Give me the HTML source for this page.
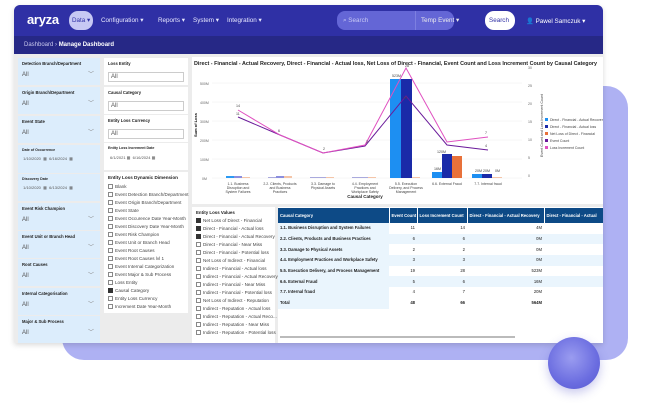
<!DOCTYPE html>
<html><head><meta charset="utf-8"><style>
*{box-sizing:border-box;margin:0;padding:0}
body{width:658px;height:403px;background:#fff;font-family:"Liberation Sans",sans-serif;position:relative;overflow:hidden}
.abs{position:absolute}
.back{left:62px;top:86px;width:566px;height:274px;background:#aeb1f3;border-radius:22px}
.sphere{left:548px;top:337px;width:52px;height:52px;border-radius:50%;background:radial-gradient(circle at 45% 40%,#9a9cf0,#6b6de0 60%,#5558cf);box-shadow:0 4px 10px rgba(80,80,200,.3)}
.panel{left:14px;top:5px;width:589px;height:338px;background:#ececec;border-radius:6px 6px 2px 2px;overflow:hidden;box-shadow:0 2px 6px rgba(0,0,0,.15)}
.nav{left:0;top:0;width:589px;height:31px;background:#2f30a5;color:#e8e8ff;font-size:6.3px}
.crumb{left:0;top:31px;width:589px;height:18px;background:#262886;color:#c9c9ee;font-size:6px;padding:6px 10px}
.f{position:absolute;background:#dcedfc;font-size:4.2px;font-weight:bold;color:#222;padding:3px 4px}
.f .v{font-weight:normal;font-size:6px;color:#555;margin-top:6px}
.f .c{position:absolute;right:6px;bottom:7px;font-size:6px;color:#888;font-weight:normal}
.w{position:absolute;background:#fff;font-size:4.2px;font-weight:bold;color:#222;padding:3px 4px}
.w .v{font-weight:normal;font-size:6px;color:#555;margin-top:6px;border:1px solid #ccc;padding:1px 2px}
.cb{font-size:4.6px;font-weight:normal;color:#444;height:8px;line-height:7px;white-space:nowrap}
.cb i{display:inline-block;width:5px;height:5px;border:0.6px solid #888;vertical-align:-1px;margin-right:2px}
.cb i.k{background:#333;border-color:#333}
table{border-collapse:collapse;font-size:4.2px;width:330px;table-layout:fixed}
th{background:#0d4a86;color:#fff;height:15px;text-align:left;padding:0 2px;border-right:.6px solid #fff;white-space:nowrap;overflow:hidden}
td{height:10.7px;padding:0 2px;text-align:right;color:#222;white-space:nowrap;overflow:hidden;line-height:10px}
td:first-child{text-align:left;font-weight:bold;background:#eaf5fd}
tr.a td{background:#eaf5fd}
</style></head><body>
<div class="abs back"></div>
<div class="abs panel">
 <div class="abs nav">
  <div class="abs" style="left:13px;top:7px;font-size:13px;font-weight:bold;color:#fff;letter-spacing:-.3px">aryza</div>
  <div class="abs" style="left:55px;top:6px;width:24px;height:19px;border-radius:9px;background:#c7c8f4;color:#2f30a5;padding:6px 3px;white-space:nowrap">Data ▾</div>
  <div class="abs" style="left:87px;top:12px">Configuration ▾</div>
  <div class="abs" style="left:144px;top:12px">Reports ▾</div>
  <div class="abs" style="left:179px;top:12px">System ▾</div>
  <div class="abs" style="left:213px;top:12px">Integration ▾</div>
  <div class="abs" style="left:323px;top:6px;width:117px;height:19px;border-radius:8px;background:#6466d6;color:#c8c9f5;padding:6px 6px">⌕ Search</div>
  <div class="abs" style="left:401px;top:6px;width:40px;height:19px;border-left:1px solid #7d7fe0;color:#eee;padding:6px 5px;white-space:nowrap">Temp Event ▾</div>
  <div class="abs" style="left:471px;top:6px;width:30px;height:19px;border-radius:9px;background:#fff;color:#2f30a5;padding:6px 4px">Search</div>
  <div class="abs" style="left:512px;top:12px;color:#fff">👤 Pawel Samczuk ▾</div>
 </div>
 <div class="abs crumb">Dashboard › <b style="color:#fff">Manage Dashboard</b></div>
</div>
<div class="f" style="left:18px;top:58px;width:82px;height:27px">Detection Branch/Department<div class="v">All</div><span class="c">﹀</span></div>
<div class="f" style="left:18px;top:87px;width:82px;height:27px">Origin Branch/Department<div class="v">All</div><span class="c">﹀</span></div>
<div class="f" style="left:18px;top:116px;width:82px;height:27px">Event State<div class="v">All</div><span class="c">﹀</span></div>
<div class="f" style="left:18px;top:145px;width:82px;height:28px;font-size:3.6px">Date of Occurrence<div class="v" style="font-size:4px;margin-top:4px">&nbsp;1/10/2020 &nbsp;▦ &nbsp;6/16/2024 &nbsp;▦</div></div>
<div class="f" style="left:18px;top:174px;width:82px;height:27px;font-size:3.6px">Discovery Date<div class="v" style="font-size:4px;margin-top:4px">&nbsp;1/10/2020 &nbsp;▦ &nbsp;6/13/2024 &nbsp;▦</div></div>
<div class="f" style="left:18px;top:203px;width:82px;height:27px">Event Risk Champion<div class="v">All</div><span class="c">﹀</span></div>
<div class="f" style="left:18px;top:231px;width:82px;height:27px">Event Unit or Branch Head<div class="v">All</div><span class="c">﹀</span></div>
<div class="f" style="left:18px;top:259px;width:82px;height:27px">Root Causes<div class="v">All</div><span class="c">﹀</span></div>
<div class="f" style="left:18px;top:288px;width:82px;height:27px">Internal Categorisation<div class="v">All</div><span class="c">﹀</span></div>
<div class="f" style="left:18px;top:316px;width:82px;height:27px">Major &amp; Sub Process<div class="v">All</div><span class="c">﹀</span></div>
<div class="w" style="left:104px;top:58px;width:84px;height:27px">Loss Entity<div class="v">All</div></div>
<div class="w" style="left:104px;top:87px;width:84px;height:27px">Causal Category<div class="v">All</div></div>
<div class="w" style="left:104px;top:115px;width:84px;height:27px">Entity Loss Currency<div class="v">All</div></div>
<div class="w" style="left:104px;top:143px;width:84px;height:27px;font-size:3.6px">Entity Loss Increment Date<div class="v" style="font-size:4px;border:none;margin-top:4px">6/1/2021 ▦ &nbsp;6/16/2024 ▦</div></div>
<div class="w" style="left:104px;top:172px;width:84px;height:141px;font-size:4.6px;white-space:nowrap">Entity Loss Dynamic Dimension
<div style="margin-top:3px">
<div class="cb"><i></i>Blank</div><div class="cb"><i></i>Event Detection Branch/Department</div><div class="cb"><i></i>Event Origin Branch/Department</div><div class="cb"><i></i>Event State</div><div class="cb"><i></i>Event Occurence Date Year-Month</div><div class="cb"><i></i>Event Discovery Date Year-Month</div><div class="cb"><i></i>Event Risk Champion</div><div class="cb"><i></i>Event Unit or Branch Head</div><div class="cb"><i></i>Event Root Causes</div><div class="cb"><i></i>Event Root Causes lvl 1</div><div class="cb"><i></i>Event Internal Categorization</div><div class="cb"><i></i>Event Major &amp; Sub Process</div><div class="cb"><i></i>Loss Entity</div><div class="cb"><i class="k"></i>Causal Category</div><div class="cb"><i></i>Entity Loss Currency</div><div class="cb"><i></i>Increment Date Year-Month</div>
</div></div>
<div class="abs" style="left:192px;top:57px;width:411px;height:147px;background:#fff">
<svg width="411" height="147" style="font-family:'Liberation Sans',sans-serif">
<text x="2" y="8" font-size="5.4" font-weight="bold" fill="#222">Direct - Financial - Actual Recovery, Direct - Financial - Actual loss, Net Loss of Direct - Financial, Event Count and Loss Increment Count by Causal Category</text>
<g stroke="#eee" stroke-width=".5"><line x1="20" y1="26" x2="330" y2="26"/><line x1="20" y1="45" x2="330" y2="45"/><line x1="20" y1="64" x2="330" y2="64"/><line x1="20" y1="83" x2="330" y2="83"/><line x1="20" y1="102" x2="330" y2="102"/><line x1="20" y1="121" x2="330" y2="121"/></g>
<g font-size="3.5" fill="#666"><text x="8" y="28">500M</text><text x="8" y="47">400M</text><text x="8" y="66">300M</text><text x="8" y="85">200M</text><text x="8" y="104">100M</text><text x="10" y="123">0M</text>
<text x="336" y="12">30</text><text x="336" y="30">25</text><text x="336" y="48">20</text><text x="336" y="66">15</text><text x="336" y="84">10</text><text x="336" y="102">5</text><text x="336" y="120">0</text></g>
<text x="5" y="80" font-size="4" font-weight="bold" transform="rotate(-90 5 80)">Sum of Loss</text>
<text x="351" y="100" font-size="3.6" transform="rotate(-90 351 100)" fill="#444">Event Count and Loss Increment Count</text>
<g>
<rect x="34" y="119" width="8" height="2" fill="#2b9af3"/><rect x="42" y="119" width="8" height="2" fill="#8b8ede"/><rect x="50" y="120" width="8" height="1" fill="#f4c5a8"/>
<rect x="76" y="120" width="8" height="1" fill="#aad"/><rect x="84" y="119" width="8" height="2" fill="#8b8ede"/><rect x="92" y="119" width="8" height="2" fill="#f4c5a8"/>
<rect x="118" y="120" width="8" height="1" fill="#aad"/><rect x="126" y="120" width="8" height="1" fill="#aad"/><rect x="134" y="120" width="8" height="1" fill="#f4c5a8"/>
<rect x="160" y="120" width="8" height="1" fill="#aad"/><rect x="168" y="120" width="8" height="1" fill="#aad"/><rect x="176" y="120" width="8" height="1" fill="#f4c5a8"/>
<rect x="198" y="22" width="11" height="99" fill="#1d8ff2"/><rect x="209" y="22" width="11" height="99" fill="#1a2aa8"/><rect x="220" y="120" width="8" height="1" fill="#f4c5a8"/>
<rect x="240" y="115" width="10" height="6" fill="#1d8ff2"/><rect x="250" y="97" width="10" height="24" fill="#1a2aa8"/><rect x="260" y="99" width="10" height="22" fill="#e8713a"/>
<rect x="280" y="117" width="10" height="4" fill="#1d8ff2"/><rect x="290" y="117" width="10" height="4" fill="#1a2aa8"/><rect x="300" y="120" width="10" height="1" fill="#f4c5a8"/>
</g>
<polyline points="46,60 88,78 131,96 173,89 214,39 255,88 296,93" fill="none" stroke="#6a1a9a" stroke-width="1"/>
<polyline points="46,53 88,78 131,96 173,88 214,11 255,85 296,80" fill="none" stroke="#e050c0" stroke-width="1"/>
<g font-size="3.6" fill="#444"><text x="44" y="50">14</text><text x="44" y="58">11</text><text x="86" y="75">6</text><text x="131" y="93">2</text><text x="174" y="86">3</text><text x="200" y="20">523M</text><text x="213" y="10">28</text><text x="245" y="96">120M</text><text x="242" y="113">16M</text><text x="283" y="115">20M 20M</text><text x="303" y="115">0M</text><text x="293" y="77">7</text><text x="293" y="90">4</text><text x="211" y="42">19</text></g>
<g font-size="3.5" fill="#444" text-anchor="middle"><text x="46" y="128">1.1. Business</text><text x="46" y="132">Disruption and</text><text x="46" y="136">System Failures</text>
<text x="88" y="128">2.2. Clients, Products</text><text x="88" y="132">and Business</text><text x="88" y="136">Practices</text>
<text x="131" y="128">3.3. Damage to</text><text x="131" y="132">Physical Assets</text>
<text x="173" y="128">4.4. Employment</text><text x="173" y="132">Practices and</text><text x="173" y="136">Workplace Safety</text>
<text x="214" y="128">5.5. Execution</text><text x="214" y="132">Delivery, and Process</text><text x="214" y="136">Management</text>
<text x="255" y="128">6.6. External Fraud</text><text x="296" y="128">7.7. Internal fraud</text>
<text x="173" y="141" font-size="4.5" font-weight="bold" fill="#222">Causal Category</text></g>
<g font-size="3.5" fill="#444"><rect x="353" y="61" width="3" height="3" fill="#1d8ff2"/><text x="358" y="64">Direct - Financial - Actual Recovery</text>
<rect x="353" y="68" width="3" height="3" fill="#1a2aa8"/><text x="358" y="71">Direct - Financial - Actual loss</text>
<rect x="353" y="75" width="3" height="3" fill="#e8713a"/><text x="358" y="78">Net Loss of Direct - Financial</text>
<rect x="353" y="82" width="3" height="3" fill="#6a1a9a"/><text x="358" y="85">Event Count</text>
<rect x="353" y="89" width="3" height="3" fill="#e050c0"/><text x="358" y="92">Loss Increment Count</text></g>
</svg></div>
<div class="w" style="left:192px;top:207px;width:83px;height:136px;font-size:4.4px">Entity Loss Values
<div style="margin-top:2px">
<div class="cb"><i class="k"></i>Net Loss of Direct - Financial</div><div class="cb"><i class="k"></i>Direct - Financial - Actual loss</div><div class="cb"><i class="k"></i>Direct - Financial - Actual Recovery</div><div class="cb"><i></i>Direct - Financial - Near Miss</div><div class="cb"><i></i>Direct - Financial - Potential loss</div><div class="cb"><i></i>Net Loss of Indirect - Financial</div><div class="cb"><i></i>Indirect - Financial - Actual loss</div><div class="cb"><i></i>Indirect - Financial - Actual Recovery</div><div class="cb"><i></i>Indirect - Financial - Near Miss</div><div class="cb"><i></i>Indirect - Financial - Potential loss</div><div class="cb"><i></i>Net Loss of Indirect - Reputation</div><div class="cb"><i></i>Indirect - Reputation - Actual loss</div><div class="cb"><i></i>Indirect - Reputation - Actual Reco...</div><div class="cb"><i></i>Indirect - Reputation - Near Miss</div><div class="cb"><i></i>Indirect - Reputation - Potential loss</div>
</div></div>
<div class="abs" style="left:278px;top:207px;width:325px;height:136px;background:#fff;overflow:hidden">
<table style="margin-top:1px">
<colgroup><col style="width:111px"><col style="width:28px"><col style="width:50px"><col style="width:77px"><col style="width:64px"></colgroup>
<tr><th>Causal Category</th><th>Event Count</th><th>Loss Increment Count</th><th>Direct - Financial - Actual Recovery</th><th>Direct - Financial - Actual</th></tr>
<tr><td>1.1. Business Disruption and System Failures</td><td>11</td><td>14</td><td>4M</td><td></td></tr>
<tr class="a"><td>2.2. Clients, Products and Business Practices</td><td>6</td><td>6</td><td>0M</td><td></td></tr>
<tr><td>3.3. Damage to Physical Assets</td><td>2</td><td>2</td><td>0M</td><td></td></tr>
<tr class="a"><td>4.4. Employment Practices and Workplace Safety</td><td>3</td><td>3</td><td>0M</td><td></td></tr>
<tr><td>5.5. Execution Delivery, and Process Management</td><td>19</td><td>28</td><td>523M</td><td>5</td></tr>
<tr class="a"><td>6.6. External Fraud</td><td>5</td><td>6</td><td>16M</td><td>1</td></tr>
<tr><td>7.7. Internal fraud</td><td>4</td><td>7</td><td>20M</td><td></td></tr>
<tr style="font-weight:bold"><td>Total</td><td>48</td><td>66</td><td>564M</td><td>6</td></tr>
</table>
<div class="abs" style="left:2px;top:129px;width:235px;height:2px;background:#bbb"></div>
</div>
<div class="abs sphere"></div>
</body></html>
